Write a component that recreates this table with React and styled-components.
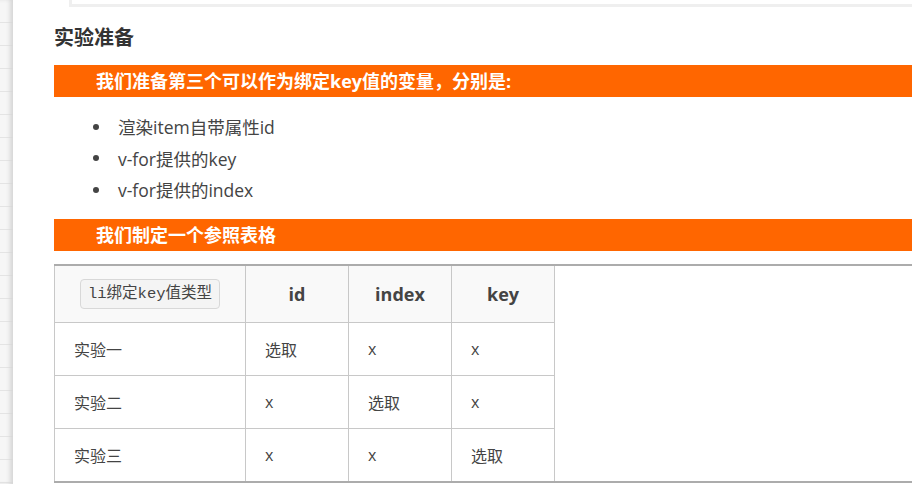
import React from "react";
import styled, { createGlobalStyle } from "styled-components";

const GlobalStyle = createGlobalStyle`
  html, body {
    margin: 0;
    padding: 0;
    background: #fff;
    overflow: hidden;
  }
  body {
    font-family: "Open Sans", "Noto Sans CJK SC", sans-serif;
    color: #444;
  }
`;

const Page = styled.div`
  display: flex;
  width: 912px;
  height: 484px;
  overflow: hidden;
`;

const Sidebar = styled.aside`
  flex: 0 0 13px;
  background:
    repeating-linear-gradient(to bottom, transparent 0, transparent 22px, #e4e4e4 22px, #e4e4e4 23px),
    #f6f6f6;
  box-shadow: inset -4px 0 4px -1px #d6d6d6;
`;

const Main = styled.main`
  flex: 1;
  padding-left: 41px;
  display: flex;
  flex-direction: column;
`;

const PrevBlock = styled.div`
  margin-left: 15px;
  height: 4px;
  border: 3px solid #efefef;
  border-top: none;
  border-right: none;
`;

const Heading = styled.h3`
  margin: 17px 0 13px;
  font-size: 20px;
  line-height: 28px;
  font-weight: 700;
  color: #333;
`;

const Banner = styled.div`
  height: 32px;
  line-height: 32px;
  padding-left: 42px;
  background: #ff6600;
  color: #fff;
  font-size: 18px;
  font-weight: 700;
`;

const List = styled.ul`
  list-style: none;
  margin: 14px 0 13px;
  padding: 0;
`;

const Item = styled.li`
  display: flex;
  align-items: center;
  height: 31.5px;
  padding-left: 39px;
  font-size: 17.5px;
  color: #444;

  &::before {
    content: "";
    width: 6px;
    height: 6px;
    border-radius: 50%;
    background: #444;
    margin-right: 19px;
  }
`;

const TableWrap = styled.div`
  margin-top: 13px;
  border-top: 2px solid #acacac;
  border-bottom: 2px solid #acacac;
  border-left: 1px solid #acacac;
`;

const Table = styled.table`
  border-collapse: collapse;
  table-layout: fixed;
  width: 500px;
  margin-left: -1px;
`;

const HeadCell = styled.th`
  width: ${(p) => p.$w}px;
  height: 56px;
  padding: 0;
  background: #f9f9f9;
  border: 1px solid #c8c8c8;
  border-top: none;
  font-size: 18px;
  font-weight: 700;
  color: #444;
  text-align: center;
`;

const Cell = styled.td`
  height: 52px;
  padding: 0 0 0 19px;
  border: 1px solid #c8c8c8;
  font-size: 16px;
  color: #444;
  text-align: left;
`;

const Row = styled.tr`
  &:last-child td {
    border-bottom: none;
  }
`;

const CodeTag = styled.code`
  display: inline-block;
  padding: 0 7px;
  line-height: 28px;
  border: 1px solid #d8d8d8;
  border-radius: 4px;
  background: #f4f4f4;
  font-family: "Liberation Mono", "Noto Sans CJK SC", monospace;
  font-size: 15.5px;
  font-weight: 400;
  color: #444;
`;

const rows = [
  ["实验一", "选取", "x", "x"],
  ["实验二", "x", "选取", "x"],
  ["实验三", "x", "x", "选取"],
];

const App = () => {
  return (
    <Page>
      <GlobalStyle />
      <Sidebar />
      <Main>
        <PrevBlock />
        <Heading>实验准备</Heading>
        <Banner>我们准备第三个可以作为绑定key值的变量，分别是:</Banner>
        <List>
          <Item>渲染item自带属性id</Item>
          <Item>v-for提供的key</Item>
          <Item>v-for提供的index</Item>
        </List>
        <Banner>我们制定一个参照表格</Banner>
        <TableWrap>
          <Table>
            <thead>
              <tr>
                <HeadCell $w={190}>
                  <CodeTag>li绑定key值类型</CodeTag>
                </HeadCell>
                <HeadCell $w={102}>id</HeadCell>
                <HeadCell $w={102}>index</HeadCell>
                <HeadCell $w={102}>key</HeadCell>
              </tr>
            </thead>
            <tbody>
              {rows.map((r) => (
                <Row key={r[0]}>
                  {r.map((c, i) => (
                    <Cell key={i}>{c}</Cell>
                  ))}
                </Row>
              ))}
            </tbody>
          </Table>
        </TableWrap>
      </Main>
    </Page>
  );
};

export default App;
